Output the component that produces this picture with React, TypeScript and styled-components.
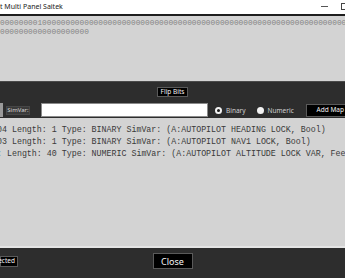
import React from "react";
import styled, { createGlobalStyle } from "styled-components";

const Global = createGlobalStyle`
  html, body { margin: 0; padding: 0; background: #2d2d2d; overflow: hidden; }
  * { box-sizing: border-box; }
`;

const Window = styled.div`
  width: 345px;
  height: 278px;
  display: flex;
  flex-direction: column;
  overflow: hidden;
  font-family: "Noto Sans", "Open Sans", sans-serif;
`;

const TitleBar = styled.div`
  height: 16px;
  flex: none;
  background: #ffffff;
  border-bottom: 2px solid #1e1e1e;
  display: flex;
  align-items: center;
  justify-content: space-between;
  padding: 0 0 1px 0;
`;

const TitleText = styled.span`
  font-size: 7px;
  color: #222;
  white-space: nowrap;
`;

const WinControls = styled.div`
  display: flex;
  align-items: center;
  gap: 13px;
  margin-right: -4px;
`;

const MinIcon = styled.span`
  width: 7px;
  height: 1px;
  background: #555;
`;

const MaxIcon = styled.span`
  width: 8px;
  height: 7px;
  border: 1px solid #444;
`;

const BitsPanel = styled.div`
  height: 65px;
  flex: none;
  background: #d3d3d3;
  padding-top: 3px;
  overflow: hidden;
`;

const BitsLine = styled.div`
  font-family: "Liberation Mono", monospace;
  font-size: 7.8px;
  line-height: 9px;
  color: #858585;
  white-space: pre;
`;

const ControlBand = styled.div`
  height: 37px;
  flex: none;
  background: #2d2d2d;
  border-top: 1px solid #4a4a4a;
  display: flex;
  flex-direction: column;
  align-items: center;
  padding-top: 5px;
`;

const DarkButton = styled.button<{ $size?: number; $w?: number; $h?: number }>`
  background: #000;
  color: #f4f4f4;
  border: 1px solid #5a5a5a;
  font-family: "Noto Sans", "Open Sans", sans-serif;
  font-size: ${(p) => p.$size ?? 6.5}px;
  width: ${(p) => (p.$w ? `${p.$w}px` : "auto")};
  height: ${(p) => p.$h ?? 10}px;
  padding: 0 2px;
  line-height: 1;
  display: flex;
  align-items: center;
  justify-content: center;
  white-space: nowrap;
`;

const Row = styled.div`
  margin-top: 6px;
  width: 100%;
  display: flex;
  align-items: center;
  height: 14px;
`;

const CutBox = styled.div`
  width: 3px;
  height: 14px;
  background: #9a9a9a;
`;

const Label = styled.div`
  margin-left: 3px;
  height: 9px;
  width: 24px;
  background: #3a3a3a;
  border: 1px solid #474747;
  color: #d8d8d8;
  font-size: 6px;
  display: flex;
  align-items: center;
  justify-content: center;
`;

const Input = styled.div`
  margin-left: 11px;
  width: 167px;
  height: 14px;
  background: #ffffff;
  border: 1px solid #8a8a8a;
`;

const Radio = styled.div<{ $ml: number }>`
  margin-left: ${(p) => p.$ml}px;
  display: flex;
  align-items: center;
  gap: 4px;
  color: #d0d0d0;
  font-size: 6.5px;
`;

const Dot = styled.span<{ $filled?: boolean }>`
  width: 7px;
  height: 7px;
  border-radius: 50%;
  background: ${(p) => (p.$filled ? "#f2f2f2" : "#1a1a1a")};
  border: ${(p) => (p.$filled ? "none" : "2px solid #f2f2f2")};
`;

const AddMap = styled(DarkButton)`
  margin-left: auto;
  margin-right: -8px;
  justify-content: flex-end;
  padding-right: 8px;
`;

const ListPanel = styled.div`
  flex: 1;
  background: #d3d3d3;
  padding-top: 6px;
  overflow: hidden;
`;

const ListLine = styled.div`
  font-family: "Liberation Mono", monospace;
  font-size: 8.3px;
  line-height: 12px;
  color: #3a3a3a;
  white-space: pre;
  margin-left: -3px;
`;

const Footer = styled.div`
  height: 32px;
  flex: none;
  background: #2d2d2d;
  border-top: 2px solid #e4e4e4;
  display: grid;
  grid-template-columns: 1fr auto 1fr;
  align-items: center;
  padding-bottom: 4px;
`;

const LeftCell = styled.div`
  justify-self: start;
`;

const SelectedButton = styled(DarkButton)`
  justify-content: flex-end;
`;

const zeros = (n: number) => "0".repeat(n);

export default function App() {
  const line1 = zeros(8) + "1" + zeros(80);
  const line2 = zeros(19);
  return (
    <>
      <Global />
      <Window>
        <TitleBar>
          <TitleText>t Multi Panel Saitek</TitleText>
          <WinControls>
            <MinIcon />
            <MaxIcon />
          </WinControls>
        </TitleBar>
        <BitsPanel>
          <BitsLine>{line1}</BitsLine>
          <BitsLine>{line2}</BitsLine>
        </BitsPanel>
        <ControlBand>
          <DarkButton $w={31} $h={10}>Flip Bits</DarkButton>
          <Row>
            <CutBox />
            <Label>SimVar:</Label>
            <Input />
            <Radio $ml={7}>
              <Dot />
              Binary
            </Radio>
            <Radio $ml={11}>
              <Dot $filled />
              Numeric
            </Radio>
            <AddMap $w={47} $h={13}>Add Map</AddMap>
          </Row>
        </ControlBand>
        <ListPanel>
          <ListLine>04 Length: 1 Type: BINARY SimVar: (A:AUTOPILOT HEADING LOCK, Bool)</ListLine>
          <ListLine>03 Length: 1 Type: BINARY SimVar: (A:AUTOPILOT NAV1 LOCK, Bool)</ListLine>
          <ListLine>: Length: 40 Type: NUMERIC SimVar: (A:AUTOPILOT ALTITUDE LOCK VAR, Feet)</ListLine>
        </ListPanel>
        <Footer>
          <LeftCell>
            <SelectedButton $w={18} $h={11} $size={6.5}>ected</SelectedButton>
          </LeftCell>
          <DarkButton $w={40} $h={16} $size={9}>Close</DarkButton>
          <div />
        </Footer>
      </Window>
    </>
  );
}
